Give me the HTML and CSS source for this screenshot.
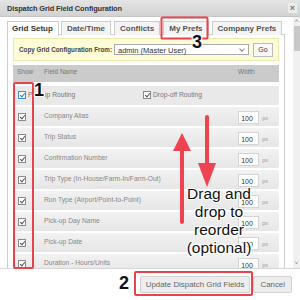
FILE: index.html
```html
<!DOCTYPE html>
<html lang="en">
<head>
    <meta charset="UTF-8">
    <title>Dispatch Grid Field Configuration</title>
    <link rel="stylesheet" href="styles.css">
</head>
<body>

    <div class="dialog">
        <div class="titlebar">
            <span class="title">Dispatch Grid Field Configuration</span>
            <span class="close">&times;</span>
        </div>

        <div class="main">
            <div class="content">
                <div class="tabs">
                    <span class="tab active">Grid Setup</span>
                    <span class="tab">Date/Time</span>
                    <span class="tab">Conflicts</span>
                    <span class="tab">My Prefs</span>
                    <span class="tab">Company Prefs</span>
                </div>

                <div class="panel">
                    <div class="copy-row">
                        <span class="copy-label">Copy Grid Configuration From:</span>
                        <span class="select">admin (Master User)<span class="chev"></span></span>
                        <span class="go-btn">Go</span>
                    </div>

                    <div class="grid-head">
                        <span class="col-show">Show</span>
                        <span class="col-name">Field Name</span>
                        <span class="col-width">Width</span>
                    </div>

                    <div class="rows">
                        <div class="row routing">
                            <span class="cb focus"></span>
                            <span class="routing-label">Pick-up Routing</span>
                            <span class="cb"></span>
                            <span class="routing-label">Drop-off Routing</span>
                        </div>
                        <div class="row">
                            <span class="cb"></span>
                            <span class="field">Company Alias</span>
                            <span class="width-input">100</span><span class="unit">px</span>
                        </div>
                        <div class="row">
                            <span class="cb"></span>
                            <span class="field">Trip Status</span>
                            <span class="width-input">100</span><span class="unit">px</span>
                        </div>
                        <div class="row">
                            <span class="cb"></span>
                            <span class="field">Confirmation Number</span>
                            <span class="width-input">100</span><span class="unit">px</span>
                        </div>
                        <div class="row">
                            <span class="cb"></span>
                            <span class="field">Trip Type (In-House/Farm-In/Farm-Out)</span>
                            <span class="width-input">100</span><span class="unit">px</span>
                        </div>
                        <div class="row">
                            <span class="cb"></span>
                            <span class="field">Run Type (Airport/Point-to-Point)</span>
                            <span class="width-input">100</span><span class="unit">px</span>
                        </div>
                        <div class="row">
                            <span class="cb"></span>
                            <span class="field">Pick-up Day Name</span>
                            <span class="width-input">100</span><span class="unit">px</span>
                        </div>
                        <div class="row">
                            <span class="cb"></span>
                            <span class="field">Pick-up Date</span>
                            <span class="width-input">100</span><span class="unit">px</span>
                        </div>
                        <div class="row">
                            <span class="cb"></span>
                            <span class="field">Duration - Hours/Units</span>
                            <span class="width-input">100</span><span class="unit">px</span>
                        </div>
                    </div>
                </div>
            </div>

            <div class="scrollbar">
                <span class="arrow">&#708;</span>
                <div class="thumb"></div>
                <span class="arrow">&#709;</span>
            </div>
        </div>

        <div class="footer">
            <span class="btn">Update Dispatch Grid Fields</span>
            <span class="btn">Cancel</span>
        </div>

        <!-- callout marks drawn over the screenshot -->
        <svg class="marks" width="300" height="300" viewBox="0 0 300 300">
            <g fill="none" stroke="#e8434b" stroke-width="2">
                <rect x="14" y="83" width="19" height="185" rx="1"/>
                <rect x="161.5" y="17.5" width="46" height="21" rx="1"/>
                <rect x="135" y="272" width="117" height="23" rx="1"/>
            </g>
            <g stroke="#ef4350" stroke-width="4" stroke-linecap="round">
                <line x1="182" y1="148" x2="182" y2="222"/>
                <line x1="207" y1="117" x2="207" y2="166"/>
            </g>
            <g fill="#ef4350">
                <polygon points="182,133 191,151 173,151"/>
                <polygon points="207,187 198,163 216,163"/>
            </g>
        </svg>

        <span class="num num-1">1</span>
        <span class="num num-2">2</span>
        <span class="num num-3">3</span>
        <div class="note">Drag and<br>drop to<br>reorder<br>(optional)</div>
    </div>

</body>
</html>
```

FILE: styles.css
```css
body {
    margin: 0;
    font-family: 'Liberation Sans', Arial, sans-serif;
    background: #fff;
}

.dialog {
    width: 300px;
    height: 300px;
    display: flex;
    flex-direction: column;
    position: relative;
    overflow: hidden;
}

.titlebar {
    height: 17px;
    flex: none;
    display: flex;
    align-items: center;
    justify-content: space-between;
    padding: 0 3px 0 7px;
    background: linear-gradient(#e4e4e4, #d2d2d2);
    border-bottom: 1px solid #c4c4c4;
    box-sizing: border-box;
}

.title {
    font-size: 7.4px;
    font-weight: bold;
    color: #333;
    letter-spacing: -0.1px;
}

.close {
    width: 9px;
    height: 10px;
    line-height: 10px;
    text-align: center;
    font-size: 9px;
    font-weight: bold;
    color: #777;
    background: #ececec;
    border-radius: 1px;
}

.main {
    height: 251px;
    flex: none;
    display: flex;
    overflow: hidden;
}

.content {
    flex: 1;
    padding: 4px 8px 0 7px;
    overflow: hidden;
}

.tabs {
    display: flex;
    gap: 3px;
    height: 14px;
}

.tab {
    padding: 0 5px;
    height: 14px;
    line-height: 14px;
    font-size: 8px;
    font-weight: bold;
    color: #555;
    background: #f4f4f4;
    border: 1px solid #cdcdcd;
    border-bottom: none;
    box-sizing: border-box;
    border-radius: 1px 1px 0 0;
}

.tab:first-child {
    margin-right: -1px;
}

.tab.active {
    background: #fff;
    color: #333;
    height: 15px;
    position: relative;
    z-index: 1;
    padding: 0 5px 0 4px;
}

.panel {
    margin-top: -1px;
    border: 1px solid #cdcdcd;
    padding: 3px 5px;
    height: 300px;
}

.copy-row {
    height: 23px;
    display: flex;
    align-items: center;
    padding: 0 5px 0 5px;
    background: #fdfcd6;
    border: 1px solid #ebe8b0;
    box-sizing: border-box;
    margin-bottom: 4px;
}

.copy-label {
    font-size: 6.3px;
    font-weight: bold;
    color: #444;
    width: 95px;
    white-space: nowrap;
}

.select {
    width: 135px;
    height: 11px;
    line-height: 11px;
    background: #fff;
    border: 1px solid #aaa;
    box-sizing: border-box;
    font-size: 7.5px;
    color: #333;
    padding-left: 3px;
    position: relative;
}

.chev {
    position: absolute;
    right: 4px;
    top: 2px;
    width: 3px;
    height: 3px;
    border-right: 1px solid #888;
    border-bottom: 1px solid #888;
    transform: rotate(45deg);
}

.go-btn {
    margin-left: auto;
    width: 20px;
    height: 14px;
    line-height: 12px;
    text-align: center;
    font-size: 7px;
    color: #333;
    background: #f9f9f9;
    border: 1px solid #bbb;
    box-sizing: border-box;
}

.grid-head {
    height: 17px;
    display: flex;
    align-items: center;
    padding: 0 0 4px 4px;
    box-sizing: border-box;
    background: #cbcbcb;
    font-size: 6.5px;
    color: #777;
    margin-bottom: 4px;
}

.col-show {
    width: 27px;
}

.col-name {
    flex: 1;
}

.col-width {
    width: 41px;
}

.rows {
    display: flex;
    flex-direction: column;
    gap: 2px;
}

.row {
    height: 19px;
    display: flex;
    align-items: center;
    padding: 0 11px 0 5px;
    background: linear-gradient(#f2f2f2, #e6e6e6);
    border-radius: 2px;
    font-size: 6.7px;
    color: #888;
}

.row.routing {
    background: #e9e9e9;
    padding-bottom: 2px;
    box-sizing: border-box;
}

.routing-label {
    margin-left: 2px;
    width: 119px;
    color: #777;
}

.cb {
    width: 8px;
    height: 8px;
    flex: none;
    border: 1px solid #8a8a8a;
    background: #fff;
    box-sizing: border-box;
    position: relative;
}

.cb::after {
    content: '';
    position: absolute;
    left: 2px;
    top: 0;
    width: 2px;
    height: 4px;
    border-right: 1px solid #555;
    border-bottom: 1px solid #555;
    transform: rotate(40deg);
}

.cb.focus {
    border-color: #3c8fd8;
}

.cb.focus::after {
    border-color: #2f7fd0;
}

.field {
    flex: 1;
    margin-left: 18px;
    margin-top: -3px;
    white-space: nowrap;
}

.width-input {
    width: 21px;
    height: 13px;
    line-height: 13px;
    margin-top: 2px;
    background: #fff;
    border: 1px solid #d4d4d4;
    box-sizing: border-box;
    font-size: 7px;
    color: #333;
    padding-left: 2px;
}

.unit {
    margin: 2px 0 0 3px;
    font-size: 5.5px;
    color: #999;
}

.scrollbar {
    width: 7px;
    flex: none;
    background: #f0f0f0;
    display: flex;
    flex-direction: column;
    align-items: center;
}

.arrow {
    font-size: 6px;
    line-height: 9px;
    color: #777;
}

.thumb {
    width: 6px;
    height: 25px;
    margin-bottom: auto;
    background: #c8c8c8;
}

.footer {
    flex: 1;
    display: flex;
    align-items: center;
    justify-content: flex-end;
    gap: 3px;
    padding: 0 8px 0 0;
    border-top: 1px solid #d6d6d6;
}

.btn {
    height: 17px;
    line-height: 16px;
    padding: 0 6px;
    font-size: 7.9px;
    color: #666;
    background: #ededed;
    border: 1px solid #d2d2d2;
    border-radius: 2px;
    box-sizing: border-box;
}

.btn:first-child {
    padding: 0 5px;
}

.marks {
    position: absolute;
    left: 0;
    top: 0;
    pointer-events: none;
}

.num,
.note {
    position: absolute;
    color: #111;
    font-family: 'Liberation Sans', Arial, sans-serif;
    text-shadow: 1px 0 0 #fff, -1px 0 0 #fff, 0 1px 0 #fff, 0 -1px 0 #fff,
                 1px 1px 0 #fff, -1px -1px 0 #fff, 1px -1px 0 #fff, -1px 1px 0 #fff;
}

.num {
    font-size: 18px;
    font-weight: bold;
    line-height: 18px;
}

.num-1 {
    left: 34px;
    top: 81px;
}

.num-2 {
    left: 119px;
    top: 274px;
}

.num-3 {
    left: 192px;
    top: 33px;
}

.note {
    left: 169px;
    top: 185px;
    width: 100px;
    text-align: center;
    font-size: 15.5px;
    line-height: 18px;
}
```
